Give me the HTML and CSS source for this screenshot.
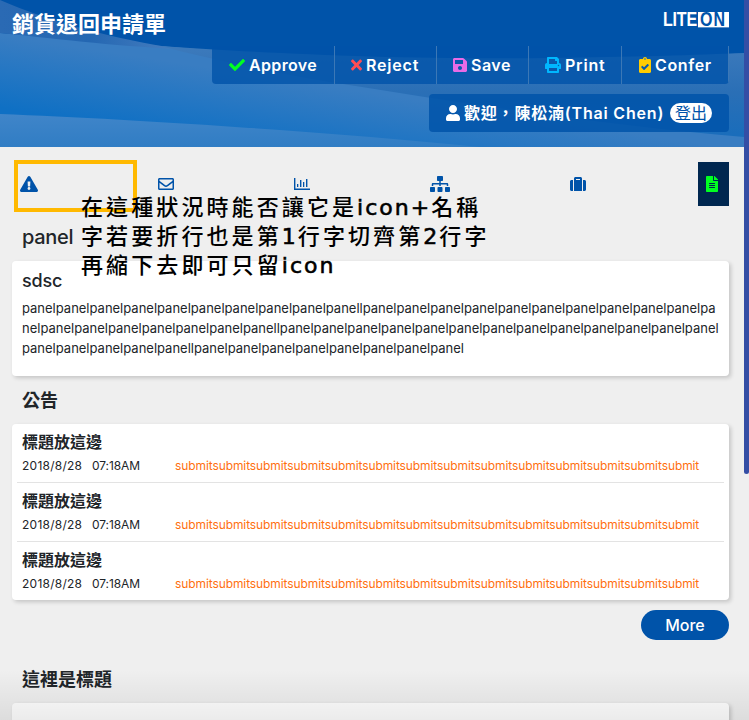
FILE: index.html
```html
<!DOCTYPE html>
<html lang="zh-Hant">
<head>
<meta charset="utf-8">
<title>銷貨退回申請單</title>
<link rel="stylesheet" href="styles.css">
</head>
<body>
<div class="page">
  <header class="hero">
    <svg class="hero-art" viewBox="0 0 744 147" preserveAspectRatio="none" aria-hidden="true">
      <defs>
        <linearGradient id="base" gradientUnits="userSpaceOnUse" x1="0" y1="35" x2="-11" y2="106"><stop offset="0" stop-color="#397dc2"/><stop offset="1" stop-color="#0f70c4"/></linearGradient>
        <linearGradient id="wave" x1="0" y1="0" x2="1" y2="0"><stop offset="0" stop-color="#2a6ab4"/><stop offset=".5" stop-color="#2467b2"/><stop offset="1" stop-color="#487fc0"/></linearGradient>
        <linearGradient id="low" x1="0" y1="0" x2="0" y2="1"><stop offset="0" stop-color="#4085c9"/><stop offset="1" stop-color="#307dc4"/></linearGradient>
        <linearGradient id="right" gradientUnits="userSpaceOnUse" x1="0" y1="50" x2="0" y2="135"><stop offset="0" stop-color="#3b79bb"/><stop offset=".5" stop-color="#2a6fb6"/><stop offset="1" stop-color="#1a6dbb"/></linearGradient>
      </defs>
      <path fill="#0053a9" d="M0 0H744V147H0Z"/>
      <path fill="url(#base)" d="M0 33C60 38 110 43 160 46L330 60L744 110V147H0Z"/>
      <path fill="url(#wave)" d="M0 0C50 22 115 39 180 49C110 46 50 38 0 33Z"/>
      <path fill="url(#right)" d="M160 46C260 53 400 60 550 58C630 57 700 55 744 53V137C620 127 480 106 330 82C270 72 210 59 160 46Z"/>
      <path fill="url(#low)" d="M0 114C130 119 330 132 480 147H0Z"/>
    </svg>
    <div class="title-row">
      <h1>銷貨退回申請單</h1>
      <div class="logo"><span class="logo-lite">LITE</span><span class="logo-on">ON</span></div>
    </div>
    <nav class="actions">
      <a class="approve"><svg width="16" height="16" viewBox="0 0 512 512" fill="#00ff21"><path d="M173.898 439.404l-166.4-166.4c-9.997-9.997-9.997-26.206 0-36.204l36.203-36.204c9.997-9.998 26.207-9.998 36.204 0L192 312.69 432.095 72.596c9.997-9.997 26.207-9.997 36.204 0l36.203 36.204c9.997 9.997 9.997 26.206 0 36.204l-294.4 294.401c-9.998 9.997-26.207 9.997-36.204-.001z"/></svg><span>Approve</span></a>
      <a class="reject"><svg width="11" height="16" viewBox="0 0 352 512" fill="#ff4d54"><path d="M242.72 256l100.07-100.07c12.28-12.28 12.28-32.19 0-44.48l-22.24-22.24c-12.28-12.28-32.19-12.28-44.48 0L176 189.28 75.93 89.21c-12.28-12.28-32.19-12.28-44.48 0L9.21 111.45c-12.28 12.28-12.28 32.19 0 44.48L109.28 256 9.21 356.07c-12.28 12.28-12.28 32.19 0 44.48l22.24 22.24c12.28 12.28 32.2 12.28 44.48 0L176 322.72l100.07 100.07c12.28 12.28 32.2 12.28 44.48 0l22.24-22.24c12.28-12.28 12.28-32.19 0-44.48L242.72 256z"/></svg><span>Reject</span></a>
      <a class="save"><svg width="14" height="16" viewBox="0 0 448 512" fill="#e86be6"><path d="M433.941 129.941l-83.882-83.882A48 48 0 0 0 316.118 32H48C21.49 32 0 53.49 0 80v352c0 26.51 21.49 48 48 48h352c26.51 0 48-21.49 48-48V163.882a48 48 0 0 0-14.059-33.941zM224 416c-35.346 0-64-28.654-64-64 0-35.346 28.654-64 64-64s64 28.654 64 64c0 35.346-28.654 64-64 64zm96-304.52V212c0 6.627-5.373 12-12 12H76c-6.627 0-12-5.373-12-12V108c0-6.627 5.373-12 12-12h228.52c3.183 0 6.235 1.264 8.485 3.515l3.48 3.48A11.996 11.996 0 0 1 320 111.48z"/></svg><span>Save</span></a>
      <a class="print"><svg width="16" height="16" viewBox="0 0 512 512" fill="#00b7ff"><path d="M448 192V77.25c0-8.49-3.37-16.62-9.37-22.63L393.37 9.37c-6-6-14.14-9.37-22.63-9.37H96C78.33 0 64 14.33 64 32v160c-35.35 0-64 28.65-64 64v112c0 8.84 7.16 16 16 16h48v96c0 17.67 14.33 32 32 32h320c17.67 0 32-14.33 32-32v-96h48c8.84 0 16-7.16 16-16V256c0-35.35-28.65-64-64-64zm-64 256H128v-96h256v96zm0-224H128V64h192v48c0 8.84 7.16 16 16 16h48v96zm48 72c-13.25 0-24-10.75-24-24 0-13.26 10.75-24 24-24s24 10.74 24 24c0 13.25-10.75 24-24 24z"/></svg><span>Print</span></a>
      <a class="confer"><svg width="12" height="16" viewBox="0 0 384 512" fill="#fc0"><path d="M336 64h-80c0-35.3-28.7-64-64-64s-64 28.7-64 64H48C21.5 64 0 85.5 0 112v352c0 26.5 21.5 48 48 48h288c26.5 0 48-21.5 48-48V112c0-26.500-21.500-48-48-48zM192 40c13.300 0 24 10.700 24 24s-10.700 24-24 24-24-10.700-24-24 10.700-24 24-24zm121.200 231.800l-143 141.800c-4.700 4.700-12.300 4.600-17-.1l-82.600-83.300c-4.700-4.700-4.600-12.300.1-17L99.100 285c4.700-4.700 12.300-4.600 17 .1l46 46.400 106-105.200c4.700-4.700 12.300-4.600 17 .1l28.200 28.400c4.700 4.800 4.600 12.300-.1 17z"/></svg><span>Confer</span></a>
    </nav>
    <div class="welcome">
      <svg width="14" height="16" viewBox="0 0 448 512" fill="#fff"><path d="M224 256c70.700 0 128-57.300 128-128S294.700 0 224 0 96 57.300 96 128s57.300 128 128 128zm89.600 32h-16.700c-22.200 10.200-46.900 16-72.900 16s-50.600-5.800-72.900-16h-16.700C60.200 288 0 348.200 0 422.400V464c0 26.500 21.500 48 48 48h352c26.500 0 48-21.500 48-48v-41.600c0-74.200-60.200-134.400-134.400-134.400z"/></svg>
      <span class="who"><strong>歡迎，陳松湳</strong>(Thai Chen)</span><a class="logout">登出</a>
    </div>
  </header>

  <nav class="tabs">
    <a><svg width="18" height="16" viewBox="0 0 576 512"><path d="M569.517 440.013C587.975 472.007 564.806 512 527.940 512H48.054c-36.937 0-59.999-40.055-41.577-71.987L246.423 23.985c18.467-32.009 64.720-31.951 83.154 0l239.940 416.028zM288 354c-25.405 0-46 20.595-46 46s20.595 46 46 46 46-20.595 46-46-20.595-46-46-46zm-43.673-165.346l7.418 136c.347 6.364 5.609 11.346 11.982 11.346h48.546c6.373 0 11.635-4.982 11.982-11.346l7.418-136c.375-6.874-5.098-12.654-11.982-12.654h-63.383c-6.884 0-12.356 5.780-11.981 12.654z"/></svg></a>
    <a><svg width="16" height="16" viewBox="0 0 512 512"><path d="M464 64H48C21.490 64 0 85.490 0 112v288c0 26.510 21.490 48 48 48h416c26.510 0 48-21.490 48-48V112c0-26.510-21.490-48-48-48zm0 48v40.805c-22.422 18.259-58.168 46.651-134.587 106.490-16.841 13.247-50.201 45.072-73.413 44.701-23.208.375-56.579-31.459-73.413-44.701C106.180 199.465 70.425 171.067 48 152.805V112h416zM48 400V214.398c22.914 18.251 55.409 43.862 104.938 82.646 21.857 17.205 60.134 55.186 103.062 54.955 42.717.231 80.509-37.199 103.053-54.947 49.528-38.783 82.032-64.401 104.947-82.653V400H48z"/></svg></a>
    <a><svg width="16" height="16" viewBox="0 0 16 16"><path d="M0 2h1.400v10.600H16V14H0zM3 8h1.300v3H3zM6 4h1.400v7H6zM9 6h1.300v5H9zM12 3h1.400v8H12z"/></svg></a>
    <a><svg width="20" height="16" viewBox="0 0 640 512"><path d="M128 352H32c-17.670 0-32 14.330-32 32v96c0 17.670 14.330 32 32 32h96c17.670 0 32-14.330 32-32v-96c0-17.670-14.330-32-32-32zm-24-80h192v48h48v-48h192v48h48v-57.590c0-21.170-17.230-38.410-38.410-38.410H344v-64h40c17.670 0 32-14.330 32-32V32c0-17.670-14.330-32-32-32H256c-17.670 0-32 14.330-32 32v96c0 17.670 14.330 32 32 32h40v64H94.410C73.230 224 56 241.230 56 262.410V320h48v-48zm264 80h-96c-17.670 0-32 14.330-32 32v96c0 17.670 14.330 32 32 32h96c17.670 0 32-14.330 32-32v-96c0-17.670-14.330-32-32-32zm240 0h-96c-17.670 0-32 14.330-32 32v96c0 17.670 14.330 32 32 32h96c17.670 0 32-14.330 32-32v-96c0-17.670-14.330-32-32-32z"/></svg></a>
    <a><svg width="16" height="16" viewBox="0 0 512 512"><path d="M128 480h256V80c0-26.500-21.500-48-48-48H176c-26.500 0-48 21.500-48 48v400zm64-384h128v32H192V96zm320 80v256c0 26.500-21.500 48-48 48h-48V128h48c26.500 0 48 21.500 48 48zM96 480H48c-26.500 0-48-21.500-48-48V176c0-26.500 21.500-48 48-48h48v352z"/></svg></a>
    <a class="current"><svg width="12" height="16" viewBox="0 0 384 512"><path d="M224 136V0H24C10.700 0 0 10.700 0 24v464c0 13.300 10.700 24 24 24h336c13.300 0 24-10.700 24-24V160H248c-13.200 0-24-10.800-24-24zm64 236c0 6.600-5.400 12-12 12H108c-6.600 0-12-5.400-12-12v-8c0-6.600 5.400-12 12-12h168c6.600 0 12 5.400 12 12v8zm0-64c0 6.600-5.400 12-12 12H108c-6.600 0-12-5.400-12-12v-8c0-6.600 5.400-12 12-12h168c6.600 0 12 5.400 12 12v8zm0-72v8c0 6.600-5.400 12-12 12H108c-6.600 0-12-5.400-12-12v-8c0-6.600 5.400-12 12-12h168c6.600 0 12 5.400 12 12zm96-114.100v6.100H256V0h6.100c6.400 0 12.500 2.500 17 7l97.900 98c4.500 4.500 7 10.600 7 16.900z"/></svg></a>
  </nav>

  <main>
    <h2 class="panel-title">panel</h2>
    <section class="card intro">
      <h3>sdsc</h3>
      <p>panelpanelpanelpanelpanelpanelpanelpanelpanelpanellpanelpanelpanelpanelpanelpanelpanelpanelpanelpanelpa<br>nelpanelpanelpanelpanelpanelpanelpanellpanelpanelpanelpanelpanelpanelpanelpanelpanelpanelpanelpanelpanel<br>panelpanelpanelpanelpanellpanelpanelpanelpanelpanelpanelpanelpanel</p>
    </section>
    <h2 class="news-title">公告</h2>
    <section class="card news">
      <article><h3>標題放這邊</h3><div class="meta"><time>2018/8/28</time><time>07:18AM</time><span>submitsubmitsubmitsubmitsubmitsubmitsubmitsubmitsubmitsubmitsubmitsubmitsubmitsubmit</span></div></article>
      <article><h3>標題放這邊</h3><div class="meta"><time>2018/8/28</time><time>07:18AM</time><span>submitsubmitsubmitsubmitsubmitsubmitsubmitsubmitsubmitsubmitsubmitsubmitsubmitsubmit</span></div></article>
      <article><h3>標題放這邊</h3><div class="meta"><time>2018/8/28</time><time>07:18AM</time><span>submitsubmitsubmitsubmitsubmitsubmitsubmitsubmitsubmitsubmitsubmitsubmitsubmitsubmit</span></div></article>
    </section>
    <a class="more">More</a>
    <h2 class="last-title">這裡是標題</h2>
    <section class="card last"></section>
  </main>
  <div class="fade"></div>
  <div class="scroll-thumb"></div>
  <div class="highlight"></div>
  <p class="note"><span>在這種狀況時能否讓它是<b>icon+</b>名稱</span><span>字若要折行也是第<b>1</b>行字切齊第<b>2</b>行字</span><span>再縮下去即可只留<b>icon</b></span></p>
</div>
</body>
</html>
```
FILE: styles.css
```css
* { box-sizing: border-box; }
body { margin: 0; background: #efefef; color: #212529; font-family: Inter, "Noto Sans CJK TC", sans-serif; }
h1, h2, h3, p { margin: 0; font-weight: 500; }
svg { display: block; flex: none; }
.page { position: relative; width: 749px; height: 720px; padding-right: 5px; overflow: hidden; }

.hero { position: relative; height: 147px; color: #fff; }
.hero-art { position: absolute; inset: 0; width: 100%; height: 100%; }
.title-row { position: relative; display: flex; justify-content: space-between; height: 46px; padding: 8px 15px 0 12px; }
h1 { font-size: 22px; line-height: 32px; font-weight: 700; }
.logo { display: flex; width: 66px; height: 12px; margin-top: 4px; font: 700 16px/12px "Liberation Sans", sans-serif; transform: scaleY(1.28); transform-origin: top; }
.logo-lite { width: 35px; letter-spacing: -.2px; }
.logo-on { width: 31px; padding-left: 2px; background: #fff; color: #0053a9; letter-spacing: 1px; }

.actions { position: relative; display: flex; width: 517px; height: 38px; margin-left: 212px; overflow: hidden; border-radius: 0 0 4px 4px; background: rgba(0, 83, 169, .8); font-size: 16px; font-weight: 600; }
.actions a { display: flex; align-items: center; gap: 4px; padding-left: 17px; border-right: 1px solid #3c78b6; white-space: nowrap; letter-spacing: .5px; }
.actions .approve { width: 123px; letter-spacing: .35px; }
.actions .reject { width: 102px; padding-left: 16px; letter-spacing: .8px; }
.actions .save { width: 92px; padding-left: 16px; }
.actions .print { width: 93px; padding-left: 16px; letter-spacing: .8px; }
.actions .confer { width: 107px; letter-spacing: .65px; }
.welcome { position: relative; display: flex; align-items: center; width: 300px; height: 38px; margin: 10px 0 0 429px; padding-left: 17px; border-radius: 4px; background: rgba(0, 83, 169, .85); font-size: 16px; font-weight: 600; white-space: nowrap; }
.who { width: 199px; margin: -2px 0 0 4px; letter-spacing: .8px; }
.who strong { font-weight: 700; }
.logout { margin-left: 7px; padding: 0 5px; border-radius: 10px; background: #fff; color: #0053a9; font-size: 16px; line-height: 20px; font-weight: 400; }

.tabs { display: grid; grid-template-columns: 138px 136px 136px 140px 136px 31px; height: 44px; margin: 15px 15px 0 12px; }
.tabs a { display: flex; align-items: center; padding-left: 8px; fill: #0053a9; }
.tabs .current { background: #002750; fill: #00ff21; }

main { display: flex; flex-direction: column; padding: 0 15px 0 12px; }
.panel-title { height: 55px; padding: 17px 0 0 10px; font-size: 20px; line-height: 28px; letter-spacing: -.3px; }
.card { border-radius: 4px; background: #fff; box-shadow: 2px 2px 4px rgba(0, 0, 0, .18); }
.intro { height: 115px; padding: 9px 10px; }
.intro h3 { font-size: 18px; line-height: 22px; letter-spacing: -.2px; }
.intro p { margin-top: 6px; font-size: 13px; line-height: 20px; font-weight: 400; letter-spacing: -.008px; white-space: nowrap; }
.news-title { height: 48px; padding: 12px 0 0 10px; font-size: 18px; line-height: 26px; font-weight: 700; }
.news { height: 176px; padding: 0 5px; }
.news article { height: 59px; padding: 7px 5px 0; border-bottom: 1px solid #e3e3e3; }
.news article:last-child { border: 0; }
.news h3 { font-size: 16px; line-height: 22px; font-weight: 700; }
.meta { display: flex; font-size: 12px; line-height: 18px; margin-top: 4px; white-space: nowrap; }
.meta time:first-child { width: 70px; letter-spacing: .25px; }
.meta time:nth-child(2) { width: 83px; letter-spacing: -.1px; }
.meta span { color: #ff6f0f; letter-spacing: -.095px; }
.more { align-self: flex-end; width: 88px; height: 30px; margin-top: 10px; border-radius: 15px; background: #0053a9; color: #fff; font-size: 16px; line-height: 30px; font-weight: 500; text-align: center; }
.last-title { height: 63px; padding: 27px 0 0 10px; font-size: 18px; line-height: 26px; font-weight: 700; }
.last { height: 60px; }

.fade { position: absolute; inset: auto 0 0; height: 50px; background: linear-gradient(transparent, rgba(0, 0, 0, .08)); }
.scroll-thumb { position: absolute; top: 0; right: 0; width: 5px; height: 474px; border-radius: 0 0 3px 3px; background: #344ea5; }
.highlight { position: absolute; left: 14px; top: 160px; width: 123px; height: 52px; border: 4px solid #ffb900; }
.note { position: absolute; left: 81px; top: 191px; color: #000; font-family: "Noto Sans CJK TC", sans-serif; font-size: 22px; line-height: 29px; font-weight: 500; letter-spacing: 3.100px; white-space: nowrap; }
.note span { display: block; height: 29px; }
.note b { font-family: "DejaVu Sans", sans-serif; font-weight: 400; letter-spacing: 2px; -webkit-text-stroke: .6px #000; }
```
